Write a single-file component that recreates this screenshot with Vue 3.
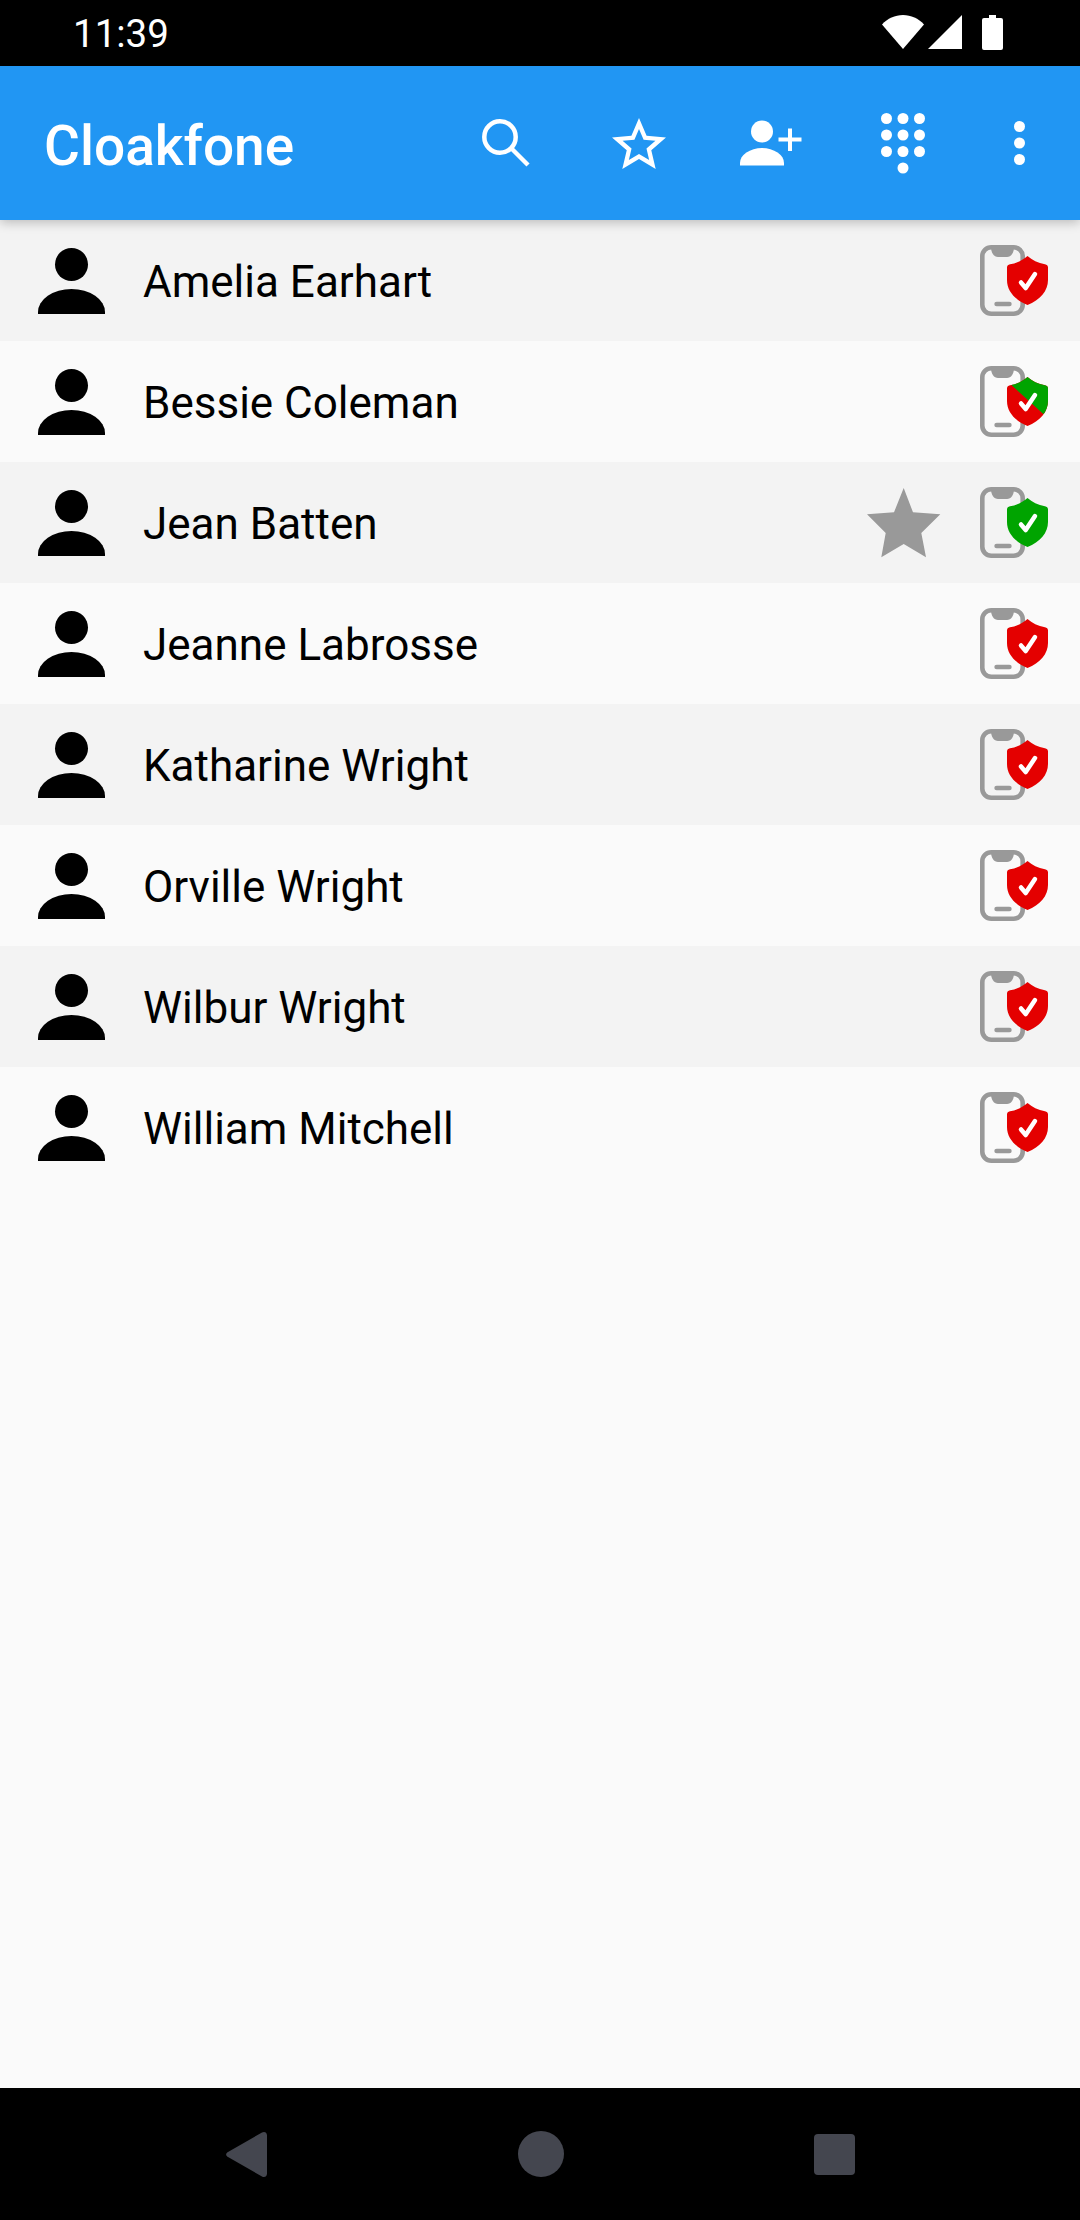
<template>
  <div class="screen">
    <!-- Status bar -->
    <div class="status-bar">
      <span class="status-time">11:39</span>
      <div class="status-icons">
        <svg width="42" height="34" viewBox="0 0 42 34"><path d="M0 9.500C5.500 3.500 13 0 21 0s15.500 3.500 21 9.500L21 34z" fill="#fff"/></svg>
        <svg width="34" height="34" viewBox="0 0 34 34"><path d="M34 0v34H0z" fill="#fff"/></svg>
        <svg class="st-battery" width="21" height="35" viewBox="0 0 21 35"><path d="M7 0h7v3h5a2 2 0 0 1 2 2v28a2 2 0 0 1-2 2H2a2 2 0 0 1-2-2V5a2 2 0 0 1 2-2h5z" fill="#fff"/></svg>
      </div>
    </div>

    <!-- Toolbar -->
    <div class="toolbar">
      <h1 class="toolbar-title">Cloakfone</h1>
      <button class="action action-search" aria-label="Search">
        <svg width="48" height="48" viewBox="0 0 48 48" fill="none" stroke="#fff" stroke-width="4.500"><circle cx="18" cy="18" r="15.700"/><path d="M29.500 29.500l16.500 16.500"/></svg>
      </button>
      <button class="action" aria-label="Favourites">
        <svg width="54" height="51" viewBox="2 2 20 19" preserveAspectRatio="none"><path fill="#fff" d="M22 9.240l-7.190-.62L12 2 9.190 8.630 2 9.240l5.460 4.730L5.820 21 12 17.270 18.180 21l-1.630-7.030L22 9.240zM12 15.400l-3.760 2.270 1-4.280-3.320-2.880 4.380-.38L12 6.100l1.710 4.040 4.380.38-3.320 2.880 1 4.280L12 15.400z"/></svg>
      </button>
      <button class="action" aria-label="Add contact">
        <svg width="62" height="46" viewBox="0 0 62 46" fill="#fff">
          <circle cx="22" cy="11.500" r="11"/>
          <path d="M0 45.500V43A22 15 0 0 1 44 43v2.500z"/>
          <path d="M38.500 17.500H48V8.500h4v9h9.500v4H52v9.500h-4v-9.500h-9.500z"/>
        </svg>
      </button>
      <button class="action" aria-label="Dial pad">
        <svg width="44" height="61" viewBox="0 0 44 61" fill="#fff">
          <circle v-for="d in dialDots" :key="d.x + '-' + d.y" :cx="d.x" :cy="d.y" r="5.500"/>
        </svg>
      </button>
      <button class="action action-more" aria-label="More">
        <svg width="11" height="44" viewBox="0 0 11 44" fill="#fff"><circle cx="5.500" cy="5.500" r="5.500"/><circle cx="5.500" cy="22" r="5.500"/><circle cx="5.500" cy="38.500" r="5.500"/></svg>
      </button>
    </div>

    <!-- Contact list -->
    <div class="contacts">
      <div v-for="c in contacts" :key="c.name" class="contact-row">
        <svg class="avatar" width="67" height="66" viewBox="0 0 67 66">
          <circle cx="33.500" cy="16.500" r="16.500"/>
          <path d="M0 66v-2A33.500 23 0 0 1 67 64v2z"/>
        </svg>
        <span class="contact-name">{{ c.name }}</span>
        <svg v-if="c.starred" class="fav" width="74" height="70" viewBox="0 0 74 70"><path d="M36.700 0L46 24.300l27.300 2L54.300 45 59 69.300 36.700 56 14.300 69.300 18.700 45 0 26.300l27-2z" fill="#999"/></svg>
        <svg class="device" width="68" height="71" viewBox="0 0 68 71">
          <rect x="2.300" y="2.300" width="40.400" height="66.400" rx="9" fill="none" stroke="#999" stroke-width="4.600"/>
          <path d="M11 2h23c0 6-3 10-7 10H18c-4 0-7-4-7-10z" fill="#999"/>
          <rect x="14.300" y="56.700" width="17.400" height="4.600" rx="2.300" fill="#999"/>
          <g transform="translate(27 11)">
            <path :d="shieldPath" :fill="c.status === 'green' ? '#00a400' : '#e40000'"/>
            <path v-if="c.status === 'mixed'" :d="shieldPath" fill="#00a400" clip-path="polygon(4.700px 8.300px, 36px 36.700px, 41px 36.700px, 41px 0, 4.700px 0)"/>
            <path d="M14 26.500l4.700 5.500L28 18" fill="none" stroke="#fff" stroke-width="4.500" stroke-linecap="round" stroke-linejoin="round"/>
          </g>
        </svg>
      </div>
    </div>

    <!-- Nav bar -->
    <div class="nav-bar">
      <svg width="41" height="47" viewBox="0 0 41 47"><path d="M2 21L36 1.500c2-1.300 5-.5 5 3v38c0 3.500-3 4.300-5 3L2 26c-2.500-1.500-2.500-3.500 0-5z" fill="#44464f"/></svg>
      <span class="nav-home"></span>
      <span class="nav-recent"></span>
    </div>
  </div>
</template>

<script setup>
const shieldPath = 'M20.500 0C25 4 31 7 38 8.300c1.800.3 3 1.500 3 3.300V24c0 11-8 20-20.500 25C8 44 0 35 0 24V11.600c0-1.800 1.200-3 3-3.300C10 7 16 4 20.500 0z'

const dialDots = []
for (const y of [5.5, 22, 38.5]) {
  for (const x of [5.5, 22, 38.5]) dialDots.push({ x, y })
}
dialDots.push({ x: 22, y: 55 })

const contacts = [
  { name: 'Amelia Earhart', status: 'red' },
  { name: 'Bessie Coleman', status: 'mixed' },
  { name: 'Jean Batten', status: 'green', starred: true },
  { name: 'Jeanne Labrosse', status: 'red' },
  { name: 'Katharine Wright', status: 'red' },
  { name: 'Orville Wright', status: 'red' },
  { name: 'Wilbur Wright', status: 'red' },
  { name: 'William Mitchell', status: 'red' },
]
</script>

<style>
html, body { margin: 0; background: #fafafa; }
</style>

<style scoped>
.screen {
  display: flex;
  flex-direction: column;
  width: 1080px;
  height: 2220px;
  overflow: hidden;
  background: #fafafa;
  font-family: Roboto, "Liberation Sans", sans-serif;
}

/* Status bar */
.status-bar {
  display: flex;
  align-items: center;
  justify-content: space-between;
  height: 66px;
  padding: 0 77px 0 73px;
  background: #000;
  color: #fff;
  flex-shrink: 0;
}
.status-time { font-size: 38.5px; }
.status-icons { display: flex; align-items: center; gap: 4px; padding-bottom: 2px; }
.st-battery { margin-left: 16px; }

/* Toolbar */
.toolbar {
  position: relative;
  z-index: 2;
  display: flex;
  align-items: center;
  height: 154px;
  padding: 0 11px 0 44px;
  background: #2196f3;
  box-shadow: 0 3px 10px rgba(0, 0, 0, 0.22);
  flex-shrink: 0;
}
.toolbar-title {
  flex: 1;
  margin: 0;
  padding-top: 5px;
  color: #fff;
  font-size: 55px;
  font-weight: 500;
}
.action {
  display: flex;
  align-items: center;
  justify-content: center;
  width: 132px;
  height: 100%;
  padding: 0;
  border: none;
  background: transparent;
}
.action-search { padding-right: 2px; }
.action-more { width: 100px; }

/* Contact list */
.contacts { flex: 1; }
.contact-row {
  display: flex;
  align-items: center;
  height: 121px;
  padding: 0 32px 0 38px;
  background: #fafafa;
}
.contact-row:nth-child(odd) { background: #f3f3f3; }
.avatar { margin-right: 38px; flex-shrink: 0; }
.contact-name {
  flex: 1;
  padding-top: 3px;
  color: #000;
  font-size: 44px;
}
.fav { margin-right: 39px; }
.device { flex-shrink: 0; }

/* Nav bar */
.nav-bar {
  display: flex;
  align-items: center;
  justify-content: space-between;
  height: 132px;
  padding: 0 225px 0 226px;
  background: #000;
  flex-shrink: 0;
}
.nav-home {
  width: 46px;
  height: 46px;
  border-radius: 50%;
  background: #44464f;
}
.nav-recent {
  width: 41px;
  height: 41px;
  border-radius: 4px;
  background: #44464f;
}
</style>
